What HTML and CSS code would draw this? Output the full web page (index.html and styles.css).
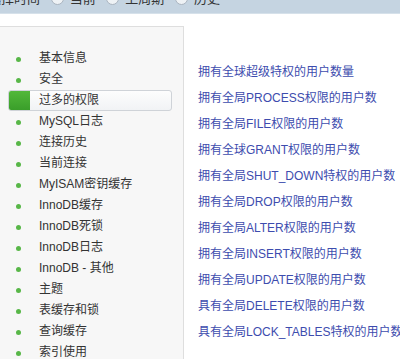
FILE: index.html
```html
<!DOCTYPE html>
<html lang="zh-CN">
<head>
    <meta charset="UTF-8">
    <title>MySQL 诊断</title>
    <link rel="stylesheet" href="styles.css">
</head>
<body>
    <div class="topbar">
        <div class="time-select">
            <span class="label">选择时间</span>
            <span class="radio"></span><span>当前</span>
            <span class="radio"></span><span>上周期</span>
            <span class="radio"></span><span>历史</span>
        </div>
    </div>

    <div class="main">
        <ul class="sidebar">
            <li><span class="dot"></span>基本信息</li>
            <li><span class="dot"></span>安全</li>
            <li class="active"><span class="dot"></span>过多的权限</li>
            <li><span class="dot"></span>MySQL日志</li>
            <li><span class="dot"></span>连接历史</li>
            <li><span class="dot"></span>当前连接</li>
            <li><span class="dot"></span>MyISAM密钥缓存</li>
            <li><span class="dot"></span>InnoDB缓存</li>
            <li><span class="dot"></span>InnoDB死锁</li>
            <li><span class="dot"></span>InnoDB日志</li>
            <li><span class="dot"></span>InnoDB - 其他</li>
            <li><span class="dot"></span>主题</li>
            <li><span class="dot"></span>表缓存和锁</li>
            <li><span class="dot"></span>查询缓存</li>
            <li><span class="dot"></span>索引使用</li>
        </ul>

        <div class="content">
            <a href="#">拥有全球超级特权的用户数量</a>
            <a href="#">拥有全局PROCESS权限的用户数</a>
            <a href="#">拥有全局FILE权限的用户数</a>
            <a href="#">拥有全球GRANT权限的用户数</a>
            <a href="#">拥有全局SHUT_DOWN特权的用户数</a>
            <a href="#">拥有全局DROP权限的用户数</a>
            <a href="#">拥有全局ALTER权限的用户数</a>
            <a href="#">拥有全局INSERT权限的用户数</a>
            <a href="#">拥有全局UPDATE权限的用户数</a>
            <a href="#">具有全局DELETE权限的用户数</a>
            <a href="#">具有全局LOCK_TABLES特权的用户数</a>
        </div>
    </div>
</body>
</html>
```

FILE: styles.css
```css
html, body {
    margin: 0;
    padding: 0;
    background: #fff;
    overflow: hidden;
}
body {
    font-family: "Liberation Sans", "Noto Sans CJK SC", sans-serif;
    color: #333;
}
.topbar {
    height: 13px;
    background: #c5d4e1;
    border-bottom: 1px solid #d6e1ea;
    overflow: hidden;
}
.time-select {
    margin-top: -11px;
    margin-left: -12px;
    font-size: 13px;
    line-height: 20px;
    color: #333;
    white-space: nowrap;
}
.time-select .radio {
    display: inline-block;
    width: 11px;
    height: 11px;
    border: 1px solid #aab4bf;
    border-radius: 50%;
    background: #eef2f5;
    margin: 0 6px 0 7px;
    vertical-align: -2px;
}
.main {
    display: flex;
    margin-top: 12px;
    height: 333px;
}
.sidebar {
    flex-shrink: 0;
    list-style: none;
    margin: 0;
    padding: 21px 0 0 0;
    width: 183px;
    background: #f7f7f7;
    border-top: 1px solid #dedede;
    border-right: 1px solid #dedede;
    font-size: 12px;
}
.sidebar li {
    height: 21px;
    line-height: 21px;
    margin: 0 11px 0 8px;
    padding-left: 31px;
    position: relative;
    color: #333;
    white-space: nowrap;
}
.sidebar .dot {
    position: absolute;
    left: 8px;
    top: 9px;
    width: 5px;
    height: 5px;
    border-radius: 50%;
    background: #58b748;
}
.sidebar li.active {
    border: 1px solid #cfd3d8;
    border-radius: 3px;
    background: linear-gradient(#fdfdfd, #f1f3f5);
    height: 19px;
    line-height: 19px;
    padding-left: 30px;
}
.sidebar li.active .dot {
    left: 0;
    top: 0;
    width: 21px;
    height: 19px;
    border-radius: 2px 0 0 2px;
    background: linear-gradient(#52b83a, #3a9e2a);
}
.content {
    display: flex;
    flex-direction: column;
    padding: 33px 0 0 14px;
    font-size: 12px;
}
.content a {
    line-height: 26px;
    color: #3d4cae;
    text-decoration: none;
    white-space: nowrap;
}
```
